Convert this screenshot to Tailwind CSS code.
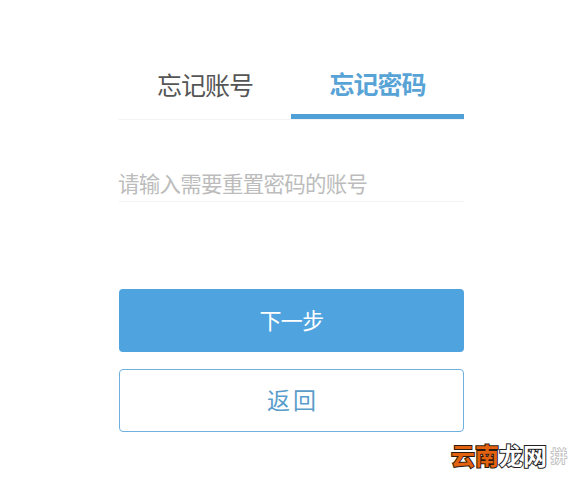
<!DOCTYPE html>
<html lang="zh"><head><meta charset="utf-8">
<script src="https://cdn.jsdelivr.net/npm/@tailwindcss/browser@4"></script>
</head>
<body class="bg-white">
<div class="relative w-[584px] h-[485px] overflow-hidden font-['Noto_Sans_CJK_SC',sans-serif] pt-[62px] pl-[119px]">
  <div class="w-[345px]">
    <div class="flex h-[58px] border-b border-[#f3f3f3]">
      <div class="w-[172px] h-[58px] flex items-center justify-center pb-[12px] text-[25px] tracking-[-1px] text-[#555555]">忘记账号</div>
      <div class="w-[173px] h-[57px] flex items-center justify-center pb-[8px] text-[25px] tracking-[-1px] font-bold text-[#58a3d6] border-b-[5px] border-[#4fa0d6]">忘记密码</div>
    </div>
    <div class="mt-[45px] h-[37px] flex items-center border-b border-[#f3f3f3] text-[21.5px] tracking-[-0.72px] leading-none text-[#bcbcbc]"><span class="-ml-px">请输入需要重置密码的账号</span></div>
    <div class="mt-[87px] h-[63px] flex items-center justify-center rounded-[4px] bg-[#4fa3de] text-[22px] tracking-[-0.6px] pb-[2px] text-white">下一步</div>
    <div class="mt-[17px] h-[63px] flex items-center justify-center rounded-[4px] border border-[#6fb0dc] text-[23px] tracking-[3px] pl-[3px] pb-[2px] text-[#5a9dcb]">返回</div>
  </div>
  <div class="absolute left-[451px] top-[437px] flex items-center text-[24px] leading-[36px] font-bold">
    <span class="text-[#e2620f] [-webkit-text-stroke:2px_#2b1a10] [paint-order:stroke_fill]">云南</span><span class="text-white [-webkit-text-stroke:2px_#222222] [paint-order:stroke_fill]">龙网</span>
    <span class="ml-[4px] text-[16px] font-normal text-white [-webkit-text-stroke:2px_#c4c4c4] [paint-order:stroke_fill]">拼</span>
  </div>
</div>
</body></html>
